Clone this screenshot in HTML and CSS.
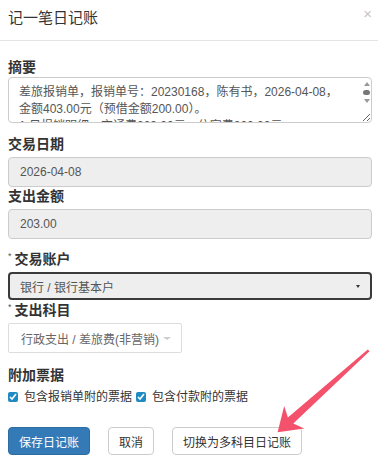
FILE: index.html
```html
<!DOCTYPE html>
<html lang="zh-CN">
<head>
  <meta charset="UTF-8" />
  <meta name="viewport" content="width=device-width, initial-scale=1.0"/>
  <title>记一笔日记账</title>
  <link rel="stylesheet" href="styles.css">
</head>
<body>

  <div class="modal-header">
    <h4>记一笔日记账</h4>
    <span class="close">×</span>
  </div>

  <form class="modal-body">
    <div class="group first">
      <label>摘要</label>
      <div class="memo-wrap">
        <textarea class="memo">差旅报销单，报销单号：20230168，陈有书，2026-04-08，
金额403.00元（预借金额200.00）。
1.日报销明细：交通费203.00元，住宿费200.00元。</textarea>
        <div class="fake-scroll">
          <span class="up"></span>
          <span class="thumb"></span>
          <span class="down"></span>
        </div>
      </div>
    </div>

    <div class="group after-memo">
      <label>交易日期</label>
      <div class="input readonly">2026-04-08</div>
    </div>

    <div class="group tight">
      <label>支出金额</label>
      <div class="input readonly">203.00</div>
    </div>

    <div class="group">
      <label><span class="req">*</span>交易账户</label>
      <div class="select focused">
        <span>银行 / 银行基本户</span>
        <i class="caret"></i>
      </div>
    </div>

    <div class="group tight2">
      <label><span class="req">*</span>支出科目</label>
      <div class="select2">
        <span>行政支出 / 差旅费(非营销)</span>
        <i class="caret light"></i>
      </div>
    </div>

    <div class="group spaced">
      <label>附加票据</label>
      <div class="checks">
        <label class="check"><input type="checkbox" checked> 包含报销单附的票据</label>
        <label class="check"><input type="checkbox" checked> 包含付款附的票据</label>
      </div>
    </div>

    <div class="buttons">
      <button type="button" class="btn primary">保存日记账</button>
      <button type="button" class="btn">取消</button>
      <button type="button" class="btn">切换为多科目日记账</button>
    </div>
  </form>

  <svg class="pointer" width="378" height="465" viewBox="0 0 378 465">
    <polygon fill="#f4516c" points="369.5,351.3 293.3,423.6 304.3,428.6 277.6,432.2 284.2,406 287.9,417.6 367.8,349.5"/>
  </svg>

</body>
</html>
```

FILE: styles.css
```css
* {
  margin: 0;
  padding: 0;
  box-sizing: border-box;
}

body {
  font-family: "Liberation Sans", "Noto Sans CJK SC", sans-serif;
  font-size: 12px;
  color: #333;
  background: #fff;
  width: 378px;
  height: 465px;
  overflow: hidden;
  position: relative;
}

.modal-header {
  display: flex;
  justify-content: space-between;
  align-items: flex-start;
  height: 41px;
  padding: 8px 6px 0 8px;
  border-bottom: 1px solid #e5e5e5;
}

.modal-header h4 {
  font-size: 15px;
  font-weight: normal;
  line-height: 20px;
}

.close {
  font-size: 15px;
  line-height: 14px;
  color: #c4c4c4;
  margin-top: -1px;
}

.modal-body {
  padding: 18px 6px 0 8px;
}

.group {
  margin-top: 12px;
}

.group.first {
  margin-top: 0;
}

.group.after-memo {
  margin-top: 13px;
}

.group.spaced {
  margin-top: 14px;
}

.group.tight {
  margin-top: 1px;
}

.group.tight2 {
  margin-top: 2px;
}

.group > label {
  display: block;
  font-size: 14px;
  font-weight: bold;
  line-height: 16px;
  margin-bottom: 5px;
}

.group.first > label {
  margin-bottom: 2px;
}

.req {
  font-size: 9px;
  font-weight: normal;
  vertical-align: top;
  line-height: 10px;
  margin-right: 3px;
  color: #555;
}

.memo-wrap {
  position: relative;
}

.memo {
  display: block;
  width: 100%;
  height: 46px;
  font: inherit;
  font-size: 12px;
  line-height: 17px;
  color: #555;
  padding: 6px 28px 0 10px;
  border: 1px solid #ccc;
  border-radius: 4px;
  overflow: hidden;
  resize: vertical;
  outline: none;
}

.fake-scroll {
  position: absolute;
  top: 5px;
  right: 2px;
  width: 7px;
  display: flex;
  flex-direction: column;
  align-items: center;
  gap: 4px;
}

.fake-scroll .up {
  border-left: 3.5px solid transparent;
  border-right: 3.5px solid transparent;
  border-bottom: 4px solid #999;
}

.fake-scroll .thumb {
  width: 7px;
  height: 5px;
  border-radius: 3px;
  background: #777;
}

.fake-scroll .down {
  border-left: 3.5px solid transparent;
  border-right: 3.5px solid transparent;
  border-top: 4px solid #999;
}

.input {
  height: 30px;
  line-height: 28px;
  padding: 0 11px;
  border: 1px solid #ccc;
  border-radius: 4px;
  color: #555;
}

.input.readonly {
  background: #eee;
}

.select {
  display: flex;
  align-items: center;
  justify-content: space-between;
  height: 28px;
  padding: 0 10px;
  background: #eee;
  border: 2px solid #3a3a3a;
  border-radius: 4px;
  color: #555;
}

.caret {
  width: 0;
  height: 0;
  border-left: 2.5px solid transparent;
  border-right: 2.5px solid transparent;
  border-top: 3px solid #333;
}

.caret.light {
  border-left-width: 4px;
  border-right-width: 4px;
  border-top: 3px solid #ccc;
}

.select2 {
  display: inline-flex;
  align-items: center;
  gap: 4px;
  height: 30px;
  padding: 0 10px 0 12px;
  border: 1px solid #ddd;
  border-radius: 2px;
  color: #666;
}

.checks {
  display: flex;
  align-items: center;
  gap: 4px;
  margin-top: 6px;
  line-height: 16px;
}

.check {
  display: flex;
  align-items: center;
  gap: 3px;
  font-size: 12px;
}

.check input {
  width: 10px;
  height: 10px;
  margin: 0 3px 0 0;
  accent-color: #1f8bc2;
}

.buttons {
  display: flex;
  gap: 18px;
  margin-top: 22px;
}

.btn {
  height: 28px;
  padding: 0 10px;
  font: inherit;
  font-size: 12px;
  color: #333;
  background: #fff;
  border: 1px solid #ccc;
  border-radius: 4px;
}

.btn.primary {
  color: #fff;
  background: #337ab7;
  border-color: #2e6da4;
}

.pointer {
  position: absolute;
  top: 0;
  left: 0;
  pointer-events: none;
}
```
